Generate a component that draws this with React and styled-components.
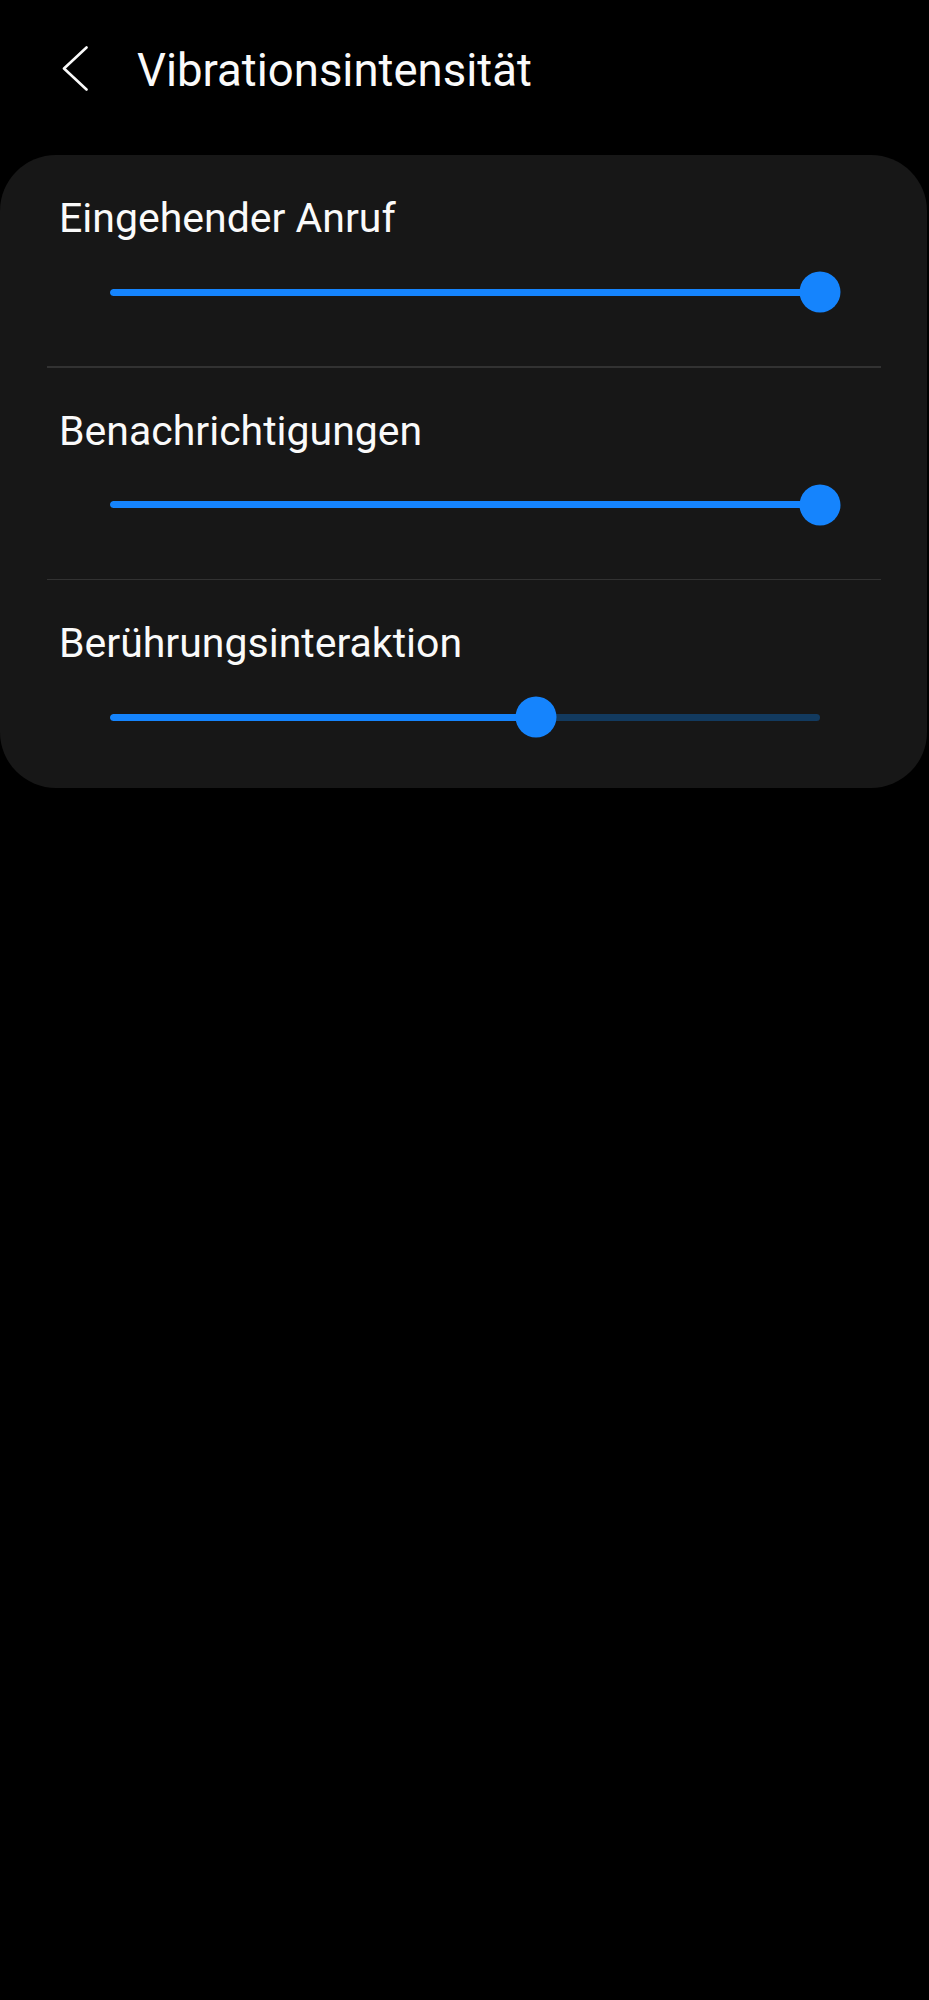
import React from "react";
import styled, { createGlobalStyle } from "styled-components";

const GlobalStyle = createGlobalStyle`
  html, body {
    margin: 0;
    padding: 0;
    background: #000;
  }
  body {
    font-family: Roboto, "Noto Sans", "Liberation Sans", sans-serif;
    color: #fafafa;
    -webkit-font-smoothing: antialiased;
  }
`;

const Page = styled.div`
  min-height: 2000px;
  background: #000;
  display: flex;
  flex-direction: column;
`;

const Header = styled.header`
  height: 155px;
  box-sizing: border-box;
  display: flex;
  align-items: flex-start;
  padding: 43px 0 0 62px;
  gap: 49px;
`;

const BackButton = styled.button`
  background: none;
  border: none;
  padding: 0;
  margin-top: 3px;
  width: 26px;
  height: 45px;
  display: flex;
  cursor: pointer;
`;

const Title = styled.h1`
  margin: 0;
  font-size: 45.5px;
  line-height: 56px;
  font-weight: 400;
  color: #fafafa;
`;

const Card = styled.section`
  background: #171717;
  border-radius: 56px;
  margin-right: 2px;
  display: flex;
  flex-direction: column;
`;

const Row = styled.div`
  padding: 38px 0 ${(p) => (p.$last ? "49px" : "52px")};
  display: flex;
  flex-direction: column;
`;

const Divider = styled.div`
  height: 1.5px;
  margin: 0 46px 0 47px;
  background: #323232;
`;

const Label = styled.div`
  font-size: 41px;
  line-height: 50px;
  padding-left: 59px;
  color: #fafafa;
`;

const SliderArea = styled.div`
  margin: 27px 0 0 110px;
  width: 710px;
  height: 44px;
  position: relative;
  display: flex;
  align-items: center;
`;

const Track = styled.div`
  width: 100%;
  height: 7px;
  border-radius: 4px;
  background: #123a5f;
  overflow: hidden;
`;

const Fill = styled.div`
  height: 100%;
  background: #1584fd;
  border-radius: 4px;
`;

const Thumb = styled.div`
  position: absolute;
  top: 50%;
  width: 41px;
  height: 41px;
  border-radius: 50%;
  background: #1584fd;
  transform: translate(-50%, -50%);
`;

function Slider({ value }) {
  return (
    <SliderArea>
      <Track>
        <Fill style={{ width: `${value}%` }} />
      </Track>
      <Thumb style={{ left: `${value}%` }} />
    </SliderArea>
  );
}

const items = [
  { label: "Eingehender Anruf", value: 100 },
  { label: "Benachrichtigungen", value: 100 },
  { label: "Berührungsinteraktion", value: 60 },
];

export default function App() {
  return (
    <Page>
      <GlobalStyle />
      <Header>
        <BackButton aria-label="Zurück">
          <svg width="26" height="45" viewBox="0 0 26 45" fill="none">
            <path
              d="M24.5 1.5 L2 22.5 L24.5 43.5"
              stroke="#fafafa"
              strokeWidth="2.6"
              strokeLinecap="round"
              strokeLinejoin="round"
            />
          </svg>
        </BackButton>
        <Title>Vibrationsintensität</Title>
      </Header>
      <Card>
        {items.map((it, i) => (
          <React.Fragment key={it.label}>
            {i > 0 && <Divider />}
            <Row $last={i === items.length - 1}>
              <Label>{it.label}</Label>
              <Slider value={it.value} />
            </Row>
          </React.Fragment>
        ))}
      </Card>
    </Page>
  );
}
